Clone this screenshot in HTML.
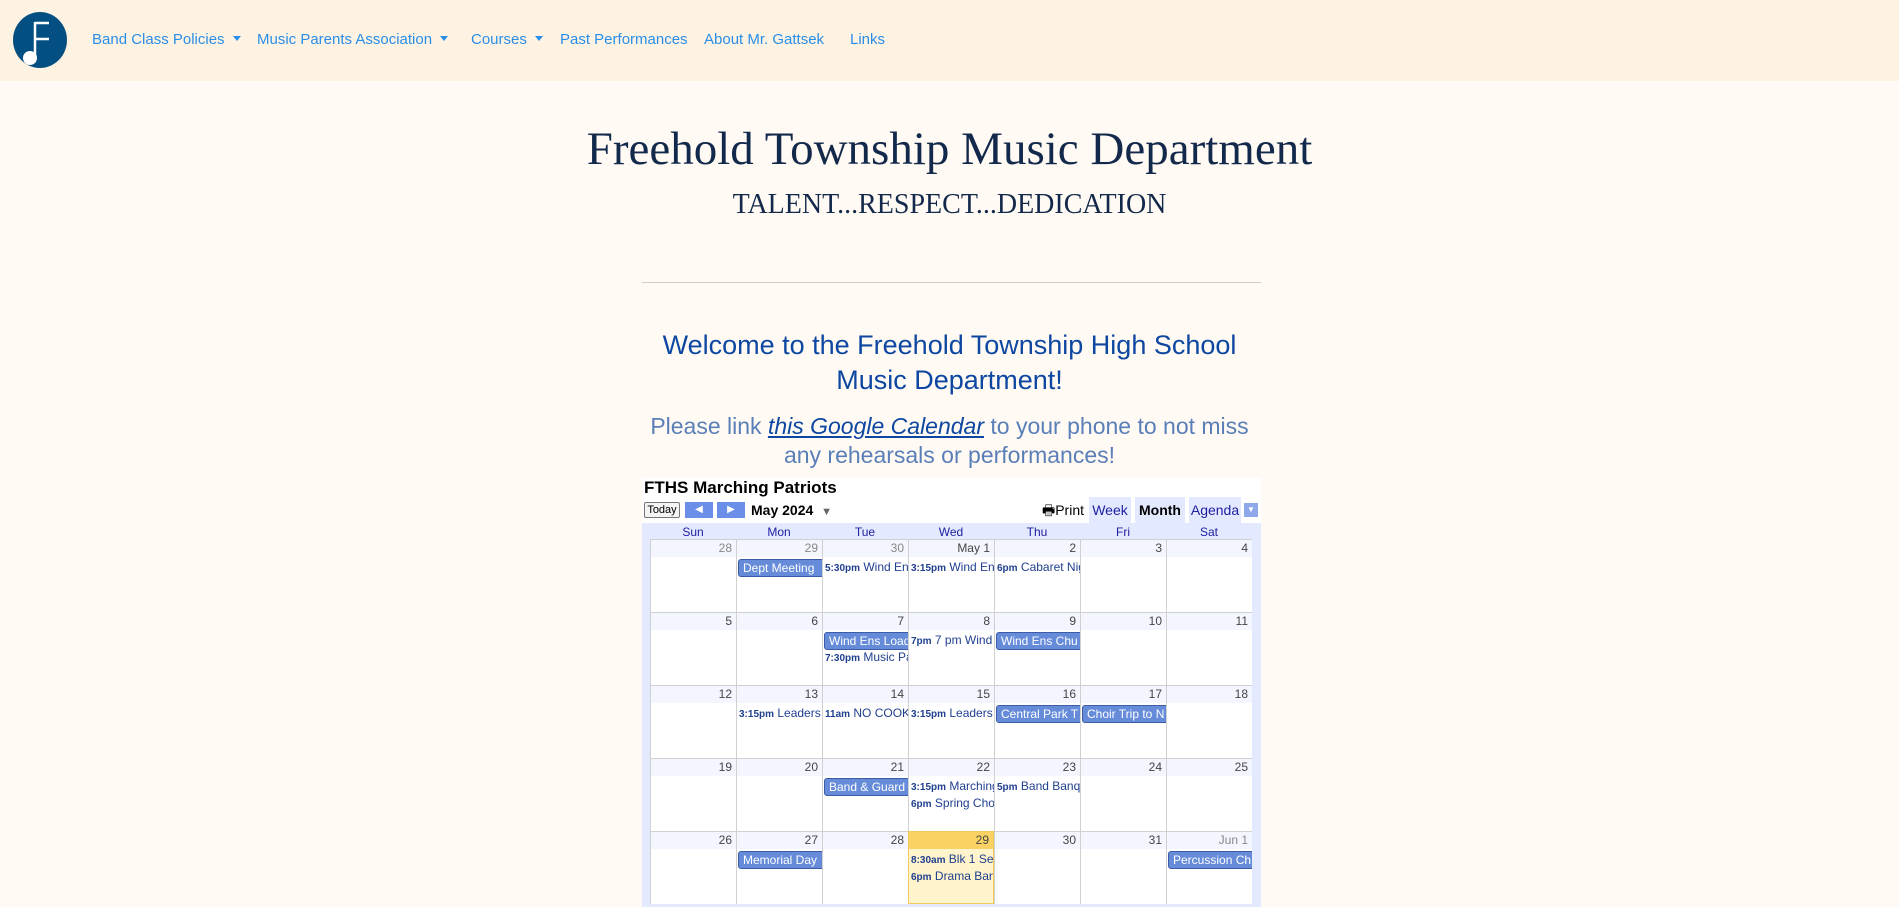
<!DOCTYPE html>
<html><head><meta charset="utf-8"><style>
body{margin:0;background:#fffaf3;font-family:"Liberation Sans",sans-serif;width:1899px;height:907px;overflow:hidden;position:relative}
.nav{position:absolute;left:0;top:0;width:1899px;height:81px;background:#fef2e3}
.nav a{position:absolute;top:31px;font-size:15px;color:#2a8ee6;text-decoration:none;white-space:nowrap}
.car{display:inline-block;width:0;height:0;border-left:4px solid transparent;border-right:4px solid transparent;border-top:5px solid #2a8ee6;vertical-align:3px;margin-left:8px}
.t{position:absolute;left:0;width:1899px;text-align:center}
.cal{position:absolute;left:642px;top:478px;width:619px;height:429px;background:#fff}
.grid{position:absolute;left:0;top:45px;width:619px;height:384px;background:#e3e9ff}
.hd{position:absolute;top:2px;width:86px;text-align:center;font-size:12px;color:#2020a0}
.cell{position:absolute;width:86px;height:73px;background:#fff;border-left:1px solid #d0d0d0;border-top:1px solid #d0d0d0;box-sizing:border-box;overflow:hidden}
.num{height:17px;background:#f4f6ff;text-align:right;font-size:12px;color:#444;padding-right:4px;line-height:17px}
.num.o{color:#888}
.chip{position:absolute;left:1px;width:200px;height:16px;background:#668cd9;border:1px solid #3c5ca8;border-radius:3px;color:#fff;font-size:12px;line-height:16px;padding-left:4px;white-space:nowrap}
.ev{position:absolute;left:2px;font-size:12px;color:#1f3f8f;white-space:nowrap}
.ev b{font-size:10px}
</style></head><body>
<div class="nav">
<svg style="position:absolute;left:12px;top:12px" width="57" height="57" viewBox="0 0 57 57"><ellipse cx="28" cy="28" rx="27" ry="28" fill="#044f82"/><path d="M23 10V47M23 11H37M23 27H37" stroke="#fff" stroke-width="2.5" fill="none"/><circle cx="18" cy="46" r="7" fill="#fff"/></svg>
<a style="left:92px">Band Class Policies<span class="car"></span></a>
<a style="left:257px">Music Parents Association<span class="car"></span></a>
<a style="left:471px">Courses<span class="car"></span></a>
<a style="left:560px">Past Performances</a>
<a style="left:704px">About Mr. Gattsek</a>
<a style="left:850px">Links</a>
</div>
<div class="t" style="top:122px;font-family:'Liberation Serif',serif;font-size:47px;color:#13294b">Freehold Township Music Department</div>
<div class="t" style="top:189px;font-family:'Liberation Serif',serif;font-size:28px;color:#13294b">TALENT...RESPECT...DEDICATION</div>
<div style="position:absolute;left:642px;top:282px;width:619px;height:1px;background:#ccc"></div>
<div class="t" style="top:328px;font-size:27px;color:#0d47a1;line-height:35px">Welcome to the Freehold Township High School<br>Music Department!</div>
<div class="t" style="top:412px;font-size:23px;color:#5a7fb8;line-height:29px">Please link <i><u style="color:#0d47a1">this Google Calendar</u></i> to your phone to not miss<br>any rehearsals or performances!</div>
<div class="cal">
<div style="position:absolute;left:2px;top:0;font-size:17px;font-weight:bold">FTHS Marching Patriots</div>
<div style="position:absolute;left:2px;top:24px;width:34px;height:14px;border:1px solid #777;border-radius:2px;font-size:11px;line-height:14px;text-align:center;background:#f4f4f4">Today</div>
<div style="position:absolute;left:43px;top:24px;width:28px;height:16px;background:#6b8ee8;color:#fff;font-size:10px;text-align:center;line-height:16px">◀</div>
<div style="position:absolute;left:75px;top:24px;width:28px;height:16px;background:#6b8ee8;color:#fff;font-size:10px;text-align:center;line-height:16px">▶</div>
<div style="position:absolute;left:109px;top:24px;font-size:14px;font-weight:bold">May 2024 <span style="color:#666;font-size:11px;margin-left:4px">▼</span></div>
<div style="position:absolute;left:400px;top:22px;font-size:14px">🖶Print</div>
<div style="position:absolute;left:447px;top:19px;width:42px;height:26px;background:#e3e9ff;font-size:14px;color:#2020a0;text-align:center;line-height:26px">Week</div>
<div style="position:absolute;left:493px;top:19px;width:50px;height:26px;background:#e3e9ff;font-size:14px;font-weight:bold;text-align:center;line-height:26px">Month</div>
<div style="position:absolute;left:547px;top:19px;width:52px;height:26px;background:#e3e9ff;font-size:14px;color:#2020a0;text-align:center;line-height:26px">Agenda</div>
<div style="position:absolute;left:602px;top:25px;width:14px;height:14px;background:#8ea8ea;color:#fff;font-size:8px;text-align:center;line-height:14px">▼</div>
<div class="grid" id="g">
<div class="hd" style="left:8px">Sun</div><div class="hd" style="left:94px">Mon</div><div class="hd" style="left:180px">Tue</div><div class="hd" style="left:266px">Wed</div><div class="hd" style="left:352px">Thu</div><div class="hd" style="left:438px">Fri</div><div class="hd" style="left:524px">Sat</div>
</div></div>
<script>
var g=document.getElementById('g');
var nums=[['28','29','30','May 1','2','3','4'],['5','6','7','8','9','10','11'],['12','13','14','15','16','17','18'],['19','20','21','22','23','24','25'],['26','27','28','29','30','31','Jun 1']];
var ev={'0,1':[['c','Dept Meeting']],'0,2':[['e','5:30pm','Wind Ens']],'0,3':[['e','3:15pm','Wind Ens']],'0,4':[['e','6pm','Cabaret Night']],
'1,2':[['c','Wind Ens Load'],['e','7:30pm','Music Parents']],'1,3':[['e','7pm','7 pm Wind']],'1,4':[['c','Wind Ens Chu']],
'2,1':[['e','3:15pm','Leaders']],'2,2':[['e','11am','NO COOK']],'2,3':[['e','3:15pm','Leaders']],'2,4':[['c','Central Park T']],'2,5':[['c','Choir Trip to N']],
'3,2':[['c','Band & Guard']],'3,3':[['e','3:15pm','Marching'],['e','6pm','Spring Choir']],'3,4':[['e','5pm','Band Banquet']],
'4,1':[['c','Memorial Day']],'4,3':[['e','8:30am','Blk 1 Se'],['e','6pm','Drama Ban']],'4,6':[['c','Percussion Ch']]};
var h='';
for(var r=0;r<5;r++)for(var c=0;c<7;c++){
var today=(r==4&&c==3);var o=(r==0&&c<3)||(r==4&&c==6);
h+='<div class="cell" style="left:'+(8+c*86)+'px;top:'+(16+r*73)+'px;'+(today?'background:#fff4cc;border:1px solid #f3c95b;':'')+'"><div class="num'+(o?' o':'')+'" style="'+(today?'background:#f9d263;':'')+'">'+nums[r][c]+'</div>';
var e=ev[r+','+c]||[];
e.forEach(function(x,i){var y=19+i*17;
if(x[0]=='c')h+='<div class="chip" style="top:'+y+'px">'+x[1]+'</div>';
else h+='<div class="ev" style="top:'+(y+1)+'px"><b>'+x[1]+'</b> '+x[2]+'</div>';});
h+='</div>';}
g.insertAdjacentHTML('beforeend',h);
</script>
</body></html>
